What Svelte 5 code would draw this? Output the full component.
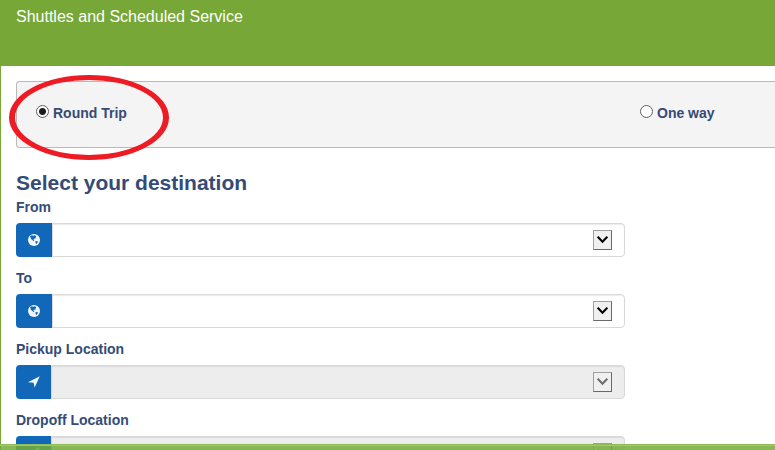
<script lang="ts">
  type Field = {
    id: string;
    label: string;
    icon: 'globe' | 'arrow';
    disabled: boolean;
  };

  const fields: Field[] = [
    { id: 'from', label: 'From', icon: 'globe', disabled: false },
    { id: 'to', label: 'To', icon: 'globe', disabled: false },
    { id: 'pickup', label: 'Pickup Location', icon: 'arrow', disabled: true },
    { id: 'dropoff', label: 'Dropoff Location', icon: 'arrow', disabled: true },
  ];

  let trip = $state('round');
</script>

<div class="page">
  <header>Shuttles and Scheduled Service</header>

  <form>
    <div class="trip-type">
      <div class="option highlighted">
        <input type="radio" id="round" name="trip" value="round" bind:group={trip} />
        <label for="round">Round Trip</label>
        <svg class="marker" viewBox="0 0 160 85" aria-hidden="true">
          <path
            d="M0 42.5A80 42.5 0 0 1 160 42.5A80 42.5 0 0 1 0 42.5ZM6 42.5A74 37.5 0 0 0 154 42.5A74 37.5 0 0 0 6 42.5Z"
            fill="#ed1c24"
            fill-rule="evenodd"
          />
        </svg>
      </div>
      <div class="option">
        <input type="radio" id="oneway" name="trip" value="oneway" bind:group={trip} />
        <label for="oneway">One way</label>
      </div>
    </div>

    <h2>Select your destination</h2>

    {#each fields as field}
      <div class="field">
        <label for={field.id}>{field.label}</label>
        <div class="input-group">
          <span class="addon" class:narrow={field.icon == 'arrow'}>
            {#if field.icon == 'globe'}
              <svg width="12" height="12" viewBox="0 0 12 12" aria-hidden="true">
                <circle cx="6" cy="6" r="6" fill="#f4f8fc" />
                <path
                  d="M2 2.4 3.6 1.2 5.4 1.8 7 1.2 8.2 2.2 7.6 3.4 8.2 4.2 6.6 4.6 5.4 5.8 6.6 7 5.8 7.2 4.4 6 3 5 2.6 3.4Z M7.4 7.2 9.8 7 9.6 8.6 8.2 10.2 7.6 9Z"
                  fill="#1268b8"
                />
              </svg>
            {:else}
              <svg width="12" height="12" viewBox="0 0 12 12" aria-hidden="true">
                <path d="M11.8.2 6.6 11.6 5.6 6.8 0 6.2Z" fill="#f4f8fc" />
              </svg>
            {/if}
          </span>
          <select id={field.id} disabled={field.disabled}>
            <option value=""></option>
          </select>
          <span class="arrow" class:disabled={field.disabled}>
            <svg width="11" height="8" viewBox="0 0 11 8" aria-hidden="true">
              <path d="M.7.7 5.5 5.8 10.3.7" fill="none" stroke="currentColor" stroke-width="2" />
            </svg>
          </span>
        </div>
      </div>
    {/each}
  </form>

  <div class="bottom-bar"></div>
</div>

<style>
  :global(body) {
    margin: 0;
    background: #fff;
  }

  .page {
    box-sizing: border-box;
    height: 100vh;
    overflow: hidden auto;
    scrollbar-width: none;
    border-left: 1px solid #76a737;
    color: #344b78;
    font-family: "Liberation Sans", Arial, sans-serif;
    font-size: 14px;
    line-height: 20px;
  }

  header {
    box-sizing: border-box;
    min-height: 66px;
    padding: 7px 15px;
    background: #76a737;
    color: #fff;
    font-size: 16px;
  }

  form {
    padding: 15px 0 12px 15px;
  }

  .trip-type {
    display: grid;
    grid-template-columns: minmax(0, 604px) minmax(120px, 1fr);
    padding: 21px 0 24px 19px;
    border: 1px solid #b9b9b9;
    border-right: 0;
    border-radius: 4px 0 0 4px;
    background: #f4f4f4;
  }

  .option {
    display: flex;
    align-items: center;
    gap: 4px;
  }

  .highlighted {
    position: relative;
  }

  .marker {
    position: absolute;
    top: -28px;
    left: -27px;
    width: 160px;
    height: 85px;
    pointer-events: none;
  }

  label {
    display: block;
    font-weight: bold;
  }

  input[type='radio'] {
    appearance: none;
    box-sizing: border-box;
    width: 13px;
    height: 13px;
    margin: 0 0 3px;
    border: 1px solid #606060;
    border-radius: 50%;
    background: #fff;
  }

  input[type='radio']:checked {
    background: radial-gradient(circle, #1c1c1c 3px, #fff 4px);
  }

  h2 {
    margin: 23px 0 2px;
    font-size: 21px;
    line-height: 24px;
  }

  .field {
    max-width: 609px;
    margin-bottom: 11px;
  }

  .field label {
    margin-bottom: 6px;
  }

  .input-group {
    position: relative;
    display: flex;
    height: 34px;
  }

  .addon {
    display: flex;
    flex: none;
    align-items: center;
    justify-content: center;
    width: 36px;
    border-radius: 4px 0 0 4px;
    background: #1268b8;
  }

  .addon.narrow {
    width: 35px;
  }

  select {
    appearance: none;
    box-sizing: border-box;
    flex: 1;
    min-width: 0;
    height: 34px;
    padding: 6px 36px 6px 12px;
    border: 1px solid #d9d9d9;
    border-radius: 0 4px 4px 0;
    background: #fff;
    box-shadow: inset 0 1px 1px rgba(0, 0, 0, 0.08);
    color: #555;
    font: inherit;
  }

  select:disabled {
    background: #ededed;
    opacity: 1;
  }

  .arrow {
    position: absolute;
    top: 7px;
    right: 13px;
    box-sizing: border-box;
    display: flex;
    justify-content: center;
    width: 19px;
    height: 20px;
    padding-top: 5px;
    border: 1px solid #a0a0a0;
    border-right-color: #696969;
    border-bottom-color: #696969;
    background: #f0f0f0;
    color: #000;
    pointer-events: none;
  }

  .arrow.disabled {
    color: #6d6d6d;
  }

  .bottom-bar {
    position: fixed;
    right: 0;
    bottom: 0;
    left: 0;
    box-sizing: border-box;
    height: 6px;
    border-top: 1px solid #8dbb58;
    background: rgba(118, 171, 56, 0.85);
    box-shadow: inset 0 1px #a0c871;
  }
</style>
